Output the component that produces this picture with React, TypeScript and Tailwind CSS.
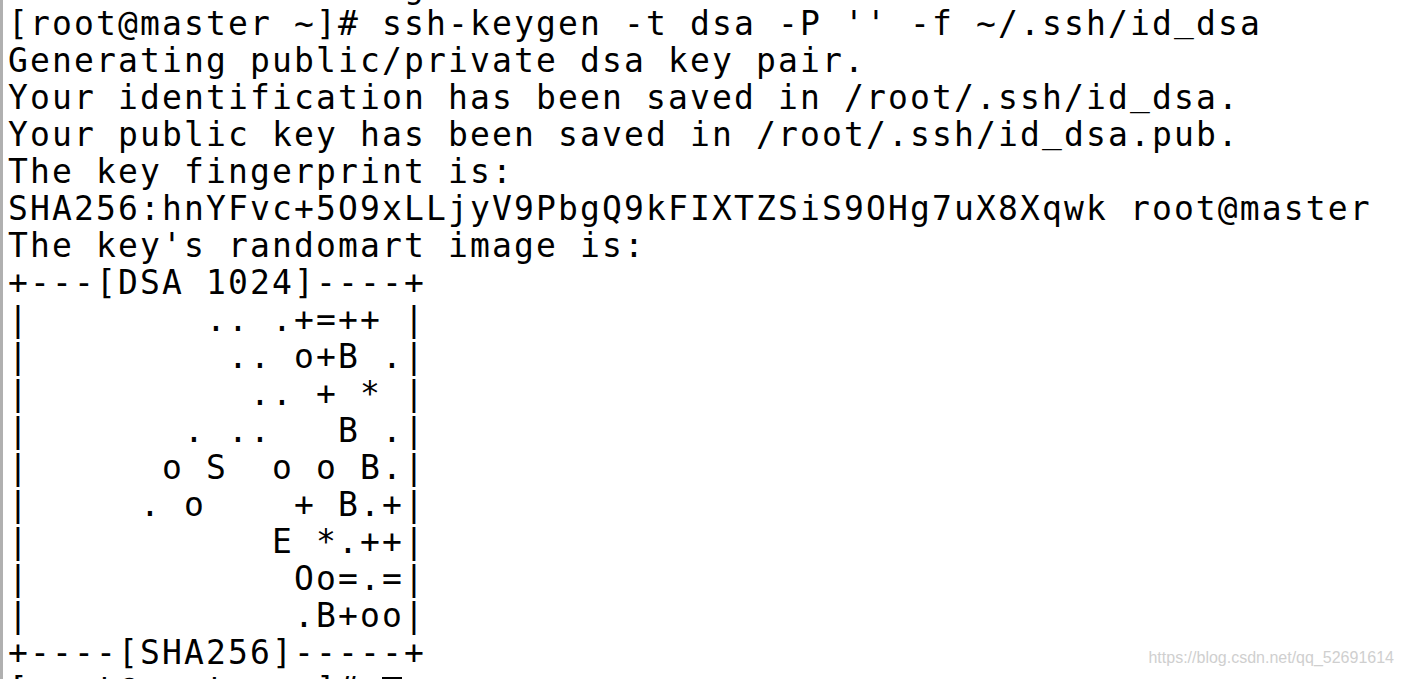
const lines = [
  "                  g",
  "[root@master ~]# ssh-keygen -t dsa -P '' -f ~/.ssh/id_dsa",
  "Generating public/private dsa key pair.",
  "Your identification has been saved in /root/.ssh/id_dsa.",
  "Your public key has been saved in /root/.ssh/id_dsa.pub.",
  "The key fingerprint is:",
  "SHA256:hnYFvc+5O9xLLjyV9PbgQ9kFIXTZSiS9OHg7uX8Xqwk root@master",
  "The key's randomart image is:",
  "+---[DSA 1024]----+",
  "|        .. .+=++ |",
  "|         .. o+B .|",
  "|          .. + * |",
  "|       . ..   B .|",
  "|      o S  o o B.|",
  "|     . o    + B.+|",
  "|           E *.++|",
  "|            Oo=.=|",
  "|            .B+oo|",
  "+----[SHA256]-----+",
];

// DejaVu's underscore sits very low, lift it a bit like the terminal font
function Line({ text }: { text: string }) {
  const parts = text.split("_");
  return (
    <div>
      {parts.map((p, i) => (
        <span key={i}>
          {p}
          {i < parts.length - 1 && <span className="relative -top-[4px]">_</span>}
        </span>
      ))}
    </div>
  );
}

export default function App() {
  return (
    <div className="relative h-[679px] w-full overflow-hidden bg-white border-l-[3px] border-[#b0b0b0]">
      <div className="-mt-[32px] pl-[5px] font-['DejaVu_Sans_Mono',monospace] text-[33px] leading-[37px] tracking-[2.13px] text-black whitespace-pre">
        {lines.map((line, idx) => (
          <Line key={idx} text={line} />
        ))}
        <div>
          [root@master ~]#{" "}
          <span className="relative top-[2px] inline-block h-[26px] w-[20px] bg-black align-baseline" />
        </div>
      </div>

      {/* watermark */}
      <div className="absolute right-[9px] bottom-[9px] font-['Liberation_Sans',Arial,sans-serif] text-[16px] text-[#cfcfcf]">
        https://blog.csdn.net/qq_52691614
      </div>
    </div>
  );
}
